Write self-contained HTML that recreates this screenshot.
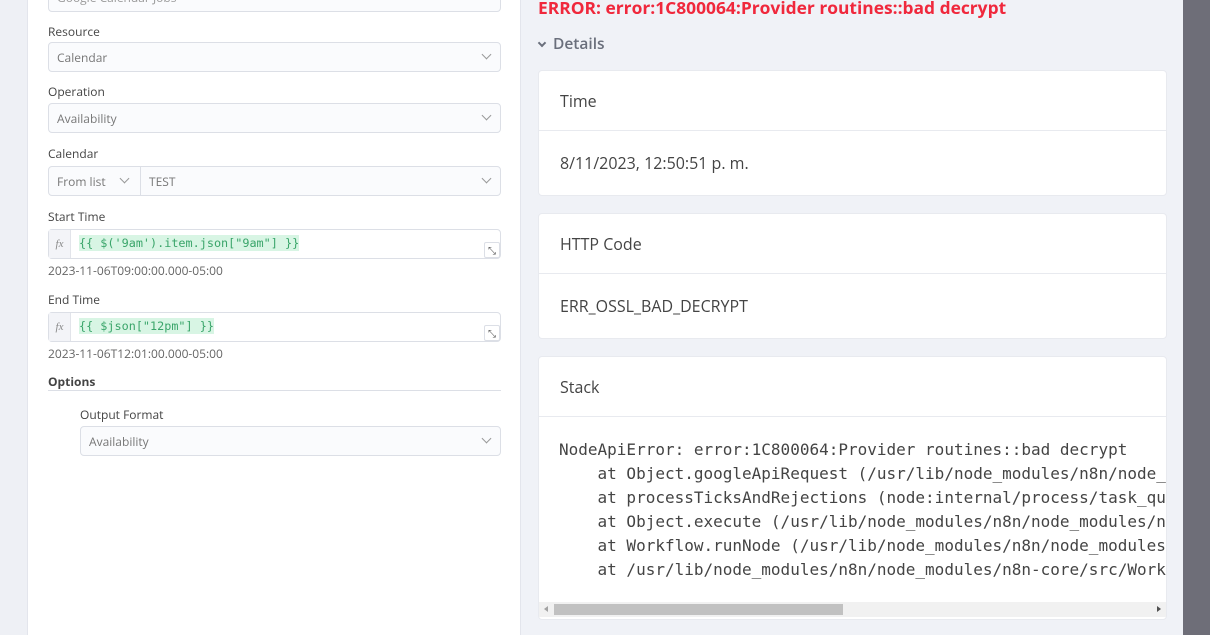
<!DOCTYPE html>
<html><head><meta charset="utf-8"><style>
*{box-sizing:border-box;margin:0;padding:0}
body{width:1210px;height:635px;overflow:hidden;position:relative;background:#f0f2f7;font-family:"Open Sans","Liberation Sans",sans-serif;}
.a{position:absolute}
.lbl{position:absolute;left:48px;font-size:12px;color:#444}
.sel{position:absolute;left:48px;width:453px;height:30px;border:1px solid #dcdfe6;border-radius:4px;background:#fafbfd;font-size:12px;color:#777;padding:6px 8px}
.chev{position:absolute;right:10px;width:7px;height:7px;border-right:1px solid #999;border-bottom:1px solid #999;transform:rotate(45deg);top:8px}
.expr{position:absolute;left:48px;width:453px;height:30px;border:1px solid #dcdfe6;border-radius:4px;background:#fff}
.fx{position:absolute;left:0;top:0;width:22px;height:28px;background:#f3f4f8;border-right:1px solid #e2e4ea;font-family:"Liberation Serif",serif;font-style:italic;font-size:11px;color:#888;text-align:center;line-height:28px}
.code{position:absolute;left:30px;top:5px;font-family:"DejaVu Sans Mono",monospace;font-size:11.8px;color:#3aa56a;background:#d8f5e4;line-height:16px}
.rs{position:absolute;right:0;bottom:0;width:16px;height:16px;border:1px solid #dcdfe6;border-radius:2px;background:#fff;font-size:10px;color:#555;text-align:center;line-height:14px}
.hint{position:absolute;left:48px;font-size:12px;color:#666}
.card{position:absolute;left:538px;width:629px;background:#fff;border:1px solid #e8eaef;border-radius:4px}
.ch{height:60px;border-bottom:1px solid #e8eaef;padding-left:21px;line-height:60px;font-size:16px;color:#444}
.cb{padding-left:21px;font-size:16px;color:#444}
pre{font-family:"DejaVu Sans Mono",monospace;font-size:16px;line-height:24px;color:#444;white-space:pre;overflow:hidden}
</style></head><body>
<div class="a" style="left:0;top:0;width:28px;height:635px;background:#eef0f5;border-right:1px solid #e3e5ec"></div>
<div class="a" style="left:28px;top:0;width:493px;height:635px;background:#fff;border-right:1px solid #e3e5ec"></div>
<div class="a" style="left:1183px;top:0;width:27px;height:635px;background:#6e6e78"></div>

<div class="sel" style="top:-18px;color:#999">Google Calendar Jobs</div>
<div class="lbl" style="top:23px">Resource</div>
<div class="sel" style="top:42px">Calendar<span class="chev"></span></div>
<div class="lbl" style="top:83px">Operation</div>
<div class="sel" style="top:103px">Availability<span class="chev"></span></div>
<div class="lbl" style="top:145px">Calendar</div>
<div class="sel" style="top:166px">From list<span class="chev" style="right:auto;left:72px"></span>
<span class="a" style="left:91px;top:0;height:28px;border-left:1px solid #dcdfe6;padding:6px 8px">TEST</span><span class="chev"></span></div>
<div class="lbl" style="top:208px">Start Time</div>
<div class="expr" style="top:229px"><div class="fx">fx</div><span class="code">{{ $('9am').item.json["9am"] }}</span><div class="rs">⤡</div></div>
<div class="hint" style="top:262px">2023-11-06T09:00:00.000-05:00</div>
<div class="lbl" style="top:291px">End Time</div>
<div class="expr" style="top:312px"><div class="fx">fx</div><span class="code">{{ $json["12pm"] }}</span><div class="rs">⤡</div></div>
<div class="hint" style="top:345px">2023-11-06T12:01:00.000-05:00</div>
<div class="lbl" style="top:373px;font-weight:bold;color:#444">Options</div>
<div class="a" style="left:48px;top:390px;width:453px;height:1px;background:#dcdfe6"></div>
<div class="lbl" style="top:406px;left:80px">Output Format</div>
<div class="sel" style="top:426px;left:80px;width:421px">Availability<span class="chev"></span></div>

<div class="a" style="left:538px;top:-4px;font-size:17.4px;font-weight:bold;color:#f0283c">ERROR: error:1C800064:Provider routines::bad decrypt</div>
<div class="a" style="left:538px;top:32px;font-size:15.5px;color:#6a6f7c;font-weight:600"><span style="display:inline-block;width:6px;height:6px;border-right:2px solid #6a6f7c;border-bottom:2px solid #6a6f7c;transform:rotate(45deg);margin:0 8px 3px 1px"></span>Details</div>

<div class="card" style="top:70px;height:126px"><div class="ch">Time</div><div class="cb" style="line-height:64px">8/11/2023, 12:50:51 p. m.</div></div>
<div class="card" style="top:213px;height:126px"><div class="ch">HTTP Code</div><div class="cb" style="line-height:64px">ERR_OSSL_BAD_DECRYPT</div></div>
<div class="card" style="top:356px;height:264px"><div class="ch">Stack</div>
<pre style="padding:21px 0 0 20px;height:185px">NodeApiError: error:1C800064:Provider routines::bad decrypt
    at Object.googleApiRequest (/usr/lib/node_modules/n8n/node_modules/n8n-nodes-base/dist
    at processTicksAndRejections (node:internal/process/task_queues:95:5)
    at Object.execute (/usr/lib/node_modules/n8n/node_modules/n8n-nodes-base/dist/nodes/
    at Workflow.runNode (/usr/lib/node_modules/n8n/node_modules/n8n-workflow/dist/Workflow
    at /usr/lib/node_modules/n8n/node_modules/n8n-core/src/WorkflowExecute.ts:1000:31</pre>
<div class="a" style="left:0;top:245px;width:627px;height:15px;background:#f1f1f1">
<div class="a" style="left:5px;top:4px;width:0;height:0;border-top:3px solid transparent;border-bottom:3px solid transparent;border-right:4px solid #a3a3a3"></div>
<div class="a" style="left:15px;top:2px;width:289px;height:11px;background:#c1c1c1"></div>
<div class="a" style="right:5px;top:4px;width:0;height:0;border-top:3px solid transparent;border-bottom:3px solid transparent;border-left:4px solid #505050"></div>
</div></div>
</body></html>
